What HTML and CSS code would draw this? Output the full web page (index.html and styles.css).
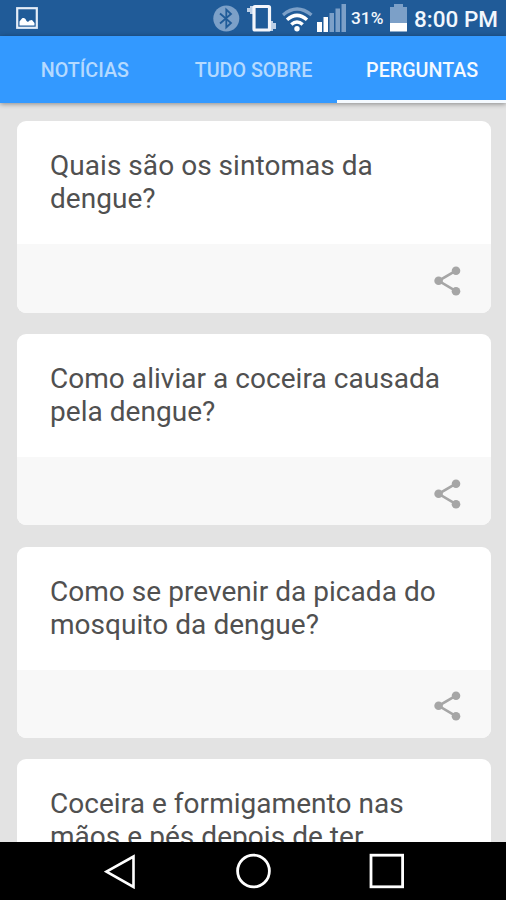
FILE: index.html
```html
<!DOCTYPE html>
<html lang="pt-BR">
<head>
    <meta charset="UTF-8">
    <meta name="viewport" content="width=device-width, initial-scale=1.0">
    <title>Perguntas</title>
    <link rel="stylesheet" href="styles.css">
</head>
<body>
    <svg class="symbols">
        <symbol id="share" viewBox="0 0 28 32">
            <path d="M22 5.7 L4.6 15.8 L22 26.2" fill="none" stroke="#a6a6a6" stroke-width="2.6"/>
            <circle cx="22" cy="5.7" r="4.3" fill="#a6a6a6"/>
            <circle cx="4.6" cy="15.8" r="4.3" fill="#a6a6a6"/>
            <circle cx="22" cy="26.2" r="4.3" fill="#a6a6a6"/>
        </symbol>
    </svg>

    <div class="status-bar">
        <svg class="icon-picture" width="22" height="22" viewBox="0 0 22 22">
            <rect x="1.2" y="1.2" width="19.6" height="19.6" fill="none" stroke="#e4edf8" stroke-width="2.2"/>
            <path d="M3.5 18.5 V14.5 L5.5 12 L6.5 11 L8 11 L9.5 12 L10.5 14 L12 15 L13.5 13.5 L16 13 L18.5 16 V18.5 Z" fill="#fff"/>
        </svg>
        <div class="status-icons">
            <svg class="icon-bluetooth" width="27" height="27" viewBox="0 0 27 27">
                <circle cx="13.3" cy="13.5" r="13" fill="#7ca0c8"/>
                <path d="M7 8.5 L18 18 L13.3 22.5 V4.5 L18 9 L7 18.5" fill="none" stroke="#205b98" stroke-width="1.8"/>
            </svg>
            <svg class="icon-vibrate" width="29" height="28" viewBox="0 0 29 28">
                <path d="M0 4 H3 V2 H6 V10 H3 V8 H0 Z M23 17 H26 V19 H29 V25 H26 V27 H23 Z" fill="#bdd0e7"/>
                <rect x="7" y="2.5" width="15.5" height="23.5" rx="1" fill="none" stroke="#f4f6fb" stroke-width="3.2"/>
            </svg>
            <svg class="icon-wifi" width="31" height="25" viewBox="0 0 31 25">
                <path d="M1 8 Q15 -4 29.5 8" fill="none" stroke="#7ca0c8" stroke-width="3.3"/>
                <path d="M5 12.7 Q15 4 25 12.7 M9.3 17.5 Q15 12.5 20.7 17.5" fill="none" stroke="#fff" stroke-width="3.5"/>
                <circle cx="15" cy="21.8" r="2.7" fill="#fff"/>
            </svg>
            <svg class="icon-signal" width="30" height="28" viewBox="0 0 30 28">
                <path d="M0 18 H5 V28 H0 Z M6.5 13 H11 V28 H6.5 Z" fill="#fff"/>
                <path d="M12.5 9 H17 V28 H12.5 Z M18.5 4.5 H23 V28 H18.5 Z M24.5 0 H29 V28 H24.5 Z" fill="#7ca0c8"/>
            </svg>
            <span class="battery-level">31%</span>
            <svg class="icon-battery" width="17" height="28" viewBox="0 0 17 28">
                <path d="M0 3 H4 V0 H13 V3 H17 V20 H0 Z" fill="#7ca0c8"/>
                <path d="M0 19 H17 V27.5 H0 Z" fill="#fff"/>
            </svg>
            <span class="clock">8:00 PM</span>
        </div>
    </div>

    <nav class="tabs">
        <a class="tab">NOTÍCIAS</a>
        <a class="tab">TUDO SOBRE</a>
        <a class="tab active">PERGUNTAS</a>
    </nav>

    <main class="questions">
        <div class="card">
            <h2>Quais são os sintomas da dengue?</h2>
            <div class="card-footer">
                <svg class="icon-share"><use href="#share"/></svg>
            </div>
        </div>
        <div class="card">
            <h2>Como aliviar a coceira causada pela dengue?</h2>
            <div class="card-footer">
                <svg class="icon-share"><use href="#share"/></svg>
            </div>
        </div>
        <div class="card">
            <h2>Como se prevenir da picada do mosquito da dengue?</h2>
            <div class="card-footer">
                <svg class="icon-share"><use href="#share"/></svg>
            </div>
        </div>
        <div class="card">
            <h2>Coceira e formigamento nas mãos e pés depois de ter</h2>
        </div>
    </main>

    <div class="nav-bar">
        <svg width="32" height="36" viewBox="0 0 32 36">
            <path d="M29.5 3.5 V34 L2.5 18.7 Z" fill="none" stroke="#fff" stroke-width="2.6"/>
        </svg>
        <svg width="36" height="36" viewBox="0 0 36 36">
            <circle cx="18.5" cy="18" r="15.9" fill="none" stroke="#fff" stroke-width="2.8"/>
        </svg>
        <svg width="36" height="36" viewBox="0 0 36 36">
            <rect x="2" y="2.2" width="31.6" height="31.6" fill="none" stroke="#fff" stroke-width="2.8"/>
        </svg>
    </div>
</body>
</html>
```
FILE: styles.css
```css
body, html {
    margin: 0;
    padding: 0;
    height: 100%;
    font-family: Roboto, sans-serif;
}

body {
    display: flex;
    flex-direction: column;
    overflow: hidden;
    background-color: #e3e3e3;
}

svg {
    display: block;
    flex: none;
}

.symbols {
    display: none;
}

.status-bar {
    display: flex;
    flex: none;
    justify-content: space-between;
    height: 36px;
    padding: 0 8px 0 16px;
    box-sizing: border-box;
    background-color: #205b98;
    color: #f2f7fd;
}

.icon-picture {
    margin-top: 7px;
}

.status-icons {
    display: flex;
    align-items: flex-start;
    white-space: nowrap;
}

.icon-bluetooth {
    margin: 5px 7px 0 0;
}

.icon-vibrate {
    margin: 4px 6px 0 0;
}

.icon-wifi {
    margin: 7px 4px 0 0;
}

.icon-signal {
    margin: 4px 4px 0 0;
}

.battery-level {
    width: 35px;
    margin-right: 4px;
    font-size: 17.3px;
    font-weight: 500;
    line-height: 37px;
}

.icon-battery {
    margin: 4px 7px 0 0;
}

.clock {
    width: 84px;
    font-size: 22.5px;
    font-weight: 500;
    line-height: 38px;
}

.tabs {
    position: relative;
    display: flex;
    flex: none;
    height: 67px;
    background-color: #3399ff;
    box-shadow: 0 1px 5px rgba(0, 0, 0, .4);
}

.tab {
    flex: 1 1 0;
    box-sizing: border-box;
    padding: 1px 0 0 1px;
    border-bottom: 3px solid transparent;
    text-align: center;
    font-size: 19.7px;
    font-weight: 500;
    line-height: 68px;
    color: #b5daff;
}

.tab.active {
    border-bottom-color: #f5faff;
    color: #f5faff;
}

.questions {
    flex: 1;
    min-height: 0;
    overflow: hidden;
    padding: 18px 15px 0 17px;
}

.card {
    margin-bottom: 21.3px;
    border-radius: 9px;
    overflow: hidden;
    background-color: #fff;
}

.card h2 {
    height: 123px;
    margin: 0;
    padding: 28px 33px 0;
    box-sizing: border-box;
    font-size: 28px;
    font-weight: 400;
    line-height: 33px;
    letter-spacing: .04px;
    color: #505050;
}

.card-footer {
    display: flex;
    justify-content: flex-end;
    align-items: center;
    height: 68.5px;
    padding: 5px 29px 0 0;
    box-sizing: border-box;
    background-color: #f8f8f8;
}

.icon-share {
    width: 28px;
    height: 32px;
}

.nav-bar {
    display: flex;
    flex: none;
    justify-content: space-between;
    height: 58px;
    padding: 11px 101px 0 104px;
    box-sizing: border-box;
    background-color: #000;
}
```
